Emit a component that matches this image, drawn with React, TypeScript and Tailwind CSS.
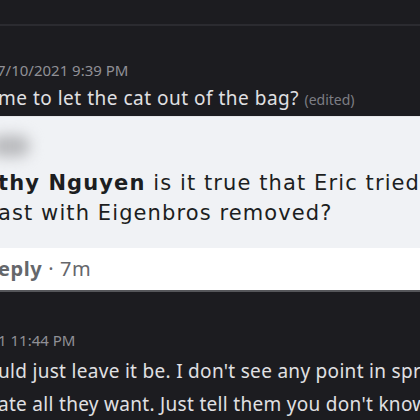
export default function App() {
  return (
    <div className="w-[420px] h-[420px] overflow-hidden bg-[#1c1c20] font-['Noto_Sans',sans-serif]">
      {/* discord top */}
      <div className="h-[116px] flex flex-col">
        <div className="h-[24px]" />
        <div className="h-[2px] bg-[#2b2b30]" />
        <div className="pt-[34px] -ml-[3px] text-[15px] leading-[20px] text-[#909096] whitespace-nowrap">
          7/10/2021 9:39 PM
        </div>
        <div className="-ml-[2px] mt-[4px] text-[19px] leading-[28px] tracking-[0.5px] text-[#e0e0e3] whitespace-nowrap">
          me to let the cat out of the bag?{" "}
          <span className="text-[14px] tracking-normal text-[#7d7e84]">(edited)</span>
        </div>
      </div>

      {/* facebook comment */}
      <div className="h-[174px] bg-white flex flex-col border-t border-[#e6e7ea]">
        <div className="relative h-[131px] bg-[#f0f2f5] pt-[51px] font-['DejaVu_Sans',sans-serif] text-[21px] leading-[30px] tracking-[1.1px] text-[#1c1e21] whitespace-nowrap">
          <div className="absolute left-[-10px] top-[18px] h-[22px] w-[40px] rounded-full bg-[#b9babd] blur-[7px]" />
          <div className="-ml-[2px]">
            <span className="font-bold">thy Nguyen</span> is it true that Eric tried
          </div>
          <div className="-ml-[2px]">ast with Eigenbros removed?</div>
        </div>
        <div className="pt-[8px] -ml-[2px] text-[20px] leading-[26px] tracking-[0.6px] text-[#65676b] whitespace-nowrap">
          <span className="font-bold">eply</span> · 7m
        </div>
      </div>

      {/* discord bottom */}
      <div className="border-t-2 border-[#55565a] flex flex-col">
        <div className="pt-[38px] -ml-[2px] text-[15px] leading-[20px] text-[#909096] whitespace-nowrap">
          1 11:44 PM
        </div>
        <div className="-ml-[2px] mt-[5px] text-[19px] leading-[33px] tracking-[0.3px] text-[#e0e0e3] whitespace-nowrap">
          <div>uld just leave it be. I don't see any point in spreading</div>
          <div>ate all they want. Just tell them you don't know</div>
        </div>
      </div>
    </div>
  );
}
